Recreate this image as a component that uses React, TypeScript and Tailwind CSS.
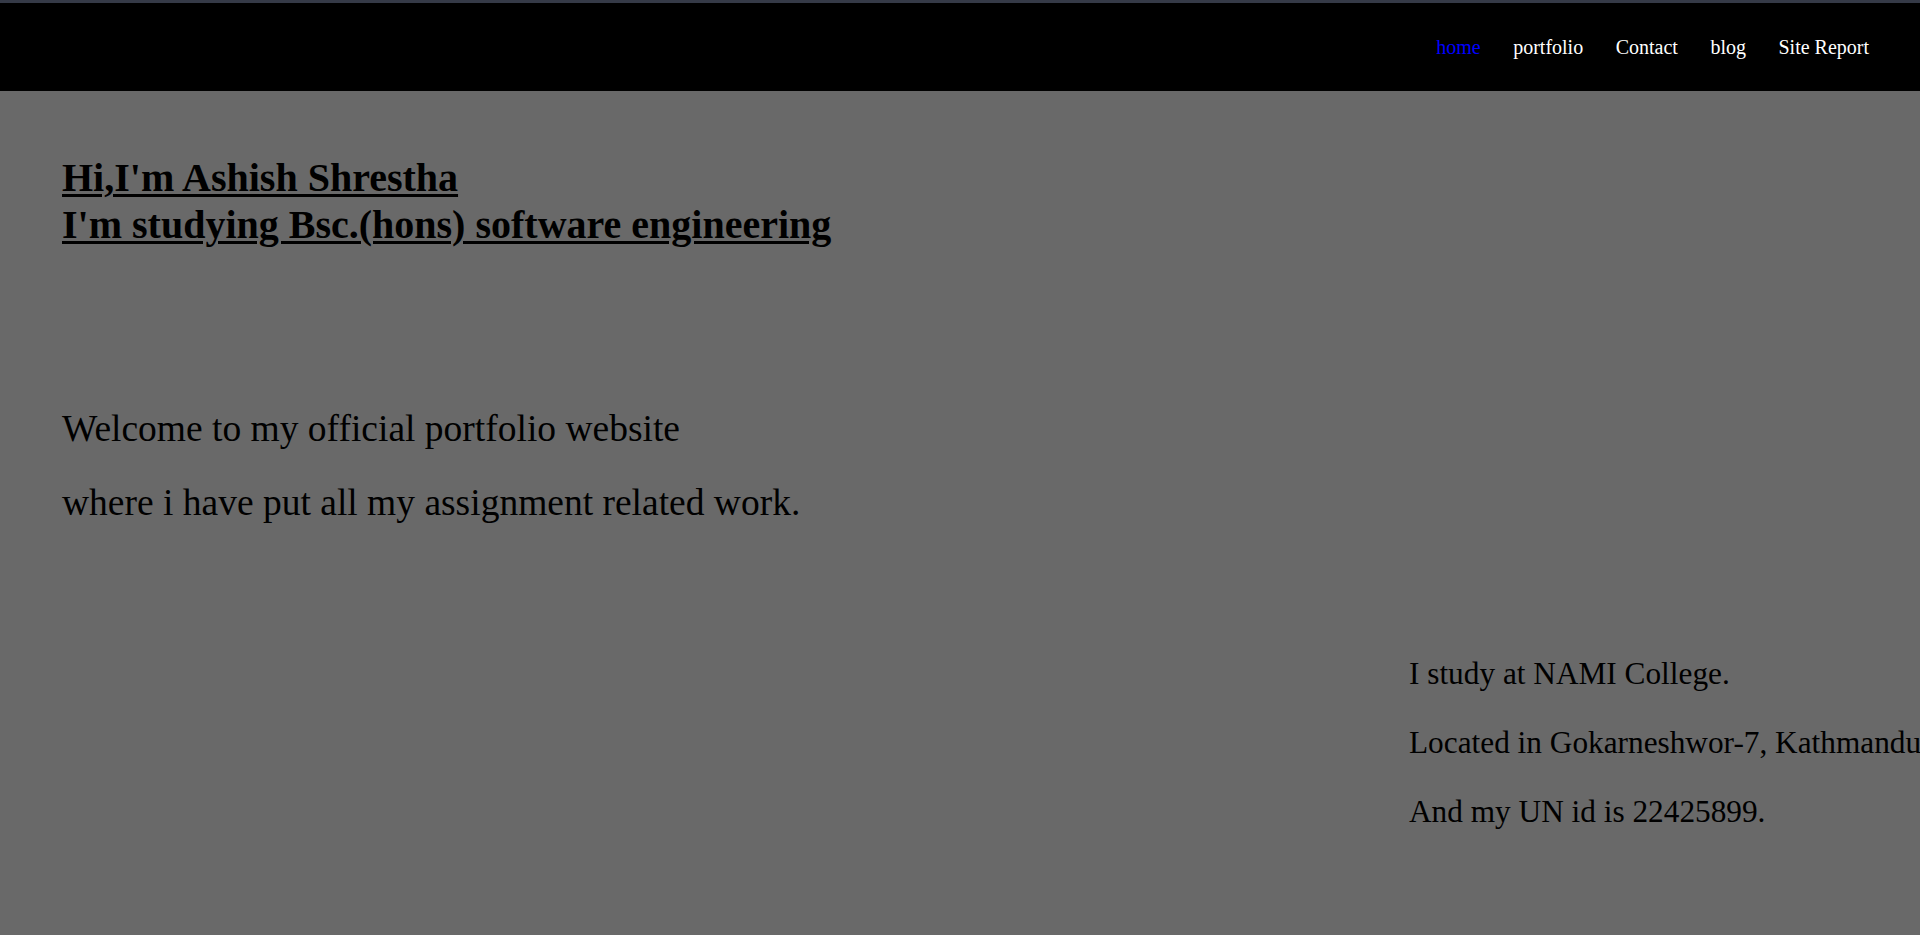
import React from "react";

const navItems = [
  { label: "home", active: true },
  { label: "portfolio", active: false },
  { label: "Contact", active: false },
  { label: "blog", active: false },
  { label: "Site Report", active: false },
];

export default function App() {
  return (
    <div className="min-h-screen overflow-hidden bg-[#696969] font-['Liberation_Serif','Times_New_Roman',serif] text-black">
      <div className="h-[3px] bg-[#353a47]" />
      <nav className="flex h-[88px] items-center justify-end bg-black pr-[51px]">
        <ul className="flex gap-[32.5px] text-[20px] leading-[23px]">
          {navItems.map((item) => (
            <li key={item.label}>
              <a
                href="#"
                className={item.active ? "text-[#0000ff]" : "text-white"}
              >
                {item.label}
              </a>
            </li>
          ))}
        </ul>
      </nav>
      <main className="pl-[62px] pt-[63px]">
        <h1 className="text-[40px] font-bold leading-[47px] underline decoration-[3px] underline-offset-[3px]">
          Hi,I'm Ashish Shrestha
          <br />
          I'm studying Bsc.(hons) software engineering
        </h1>
        <section className="mt-[159px] flex flex-col gap-[30px] text-[37.5px] leading-[44px]">
          <p>Welcome to my official portfolio website</p>
          <p>where i have put all my assignment related work.</p>
        </section>
        <section className="ml-[1347px] mt-[131px] flex flex-col gap-[33px] whitespace-nowrap text-[31.3px] leading-[36px]">
          <p>I study at NAMI College.</p>
          <p>Located in Gokarneshwor-7, Kathmandu</p>
          <p>And my UN id is 22425899.</p>
        </section>
      </main>
    </div>
  );
}
